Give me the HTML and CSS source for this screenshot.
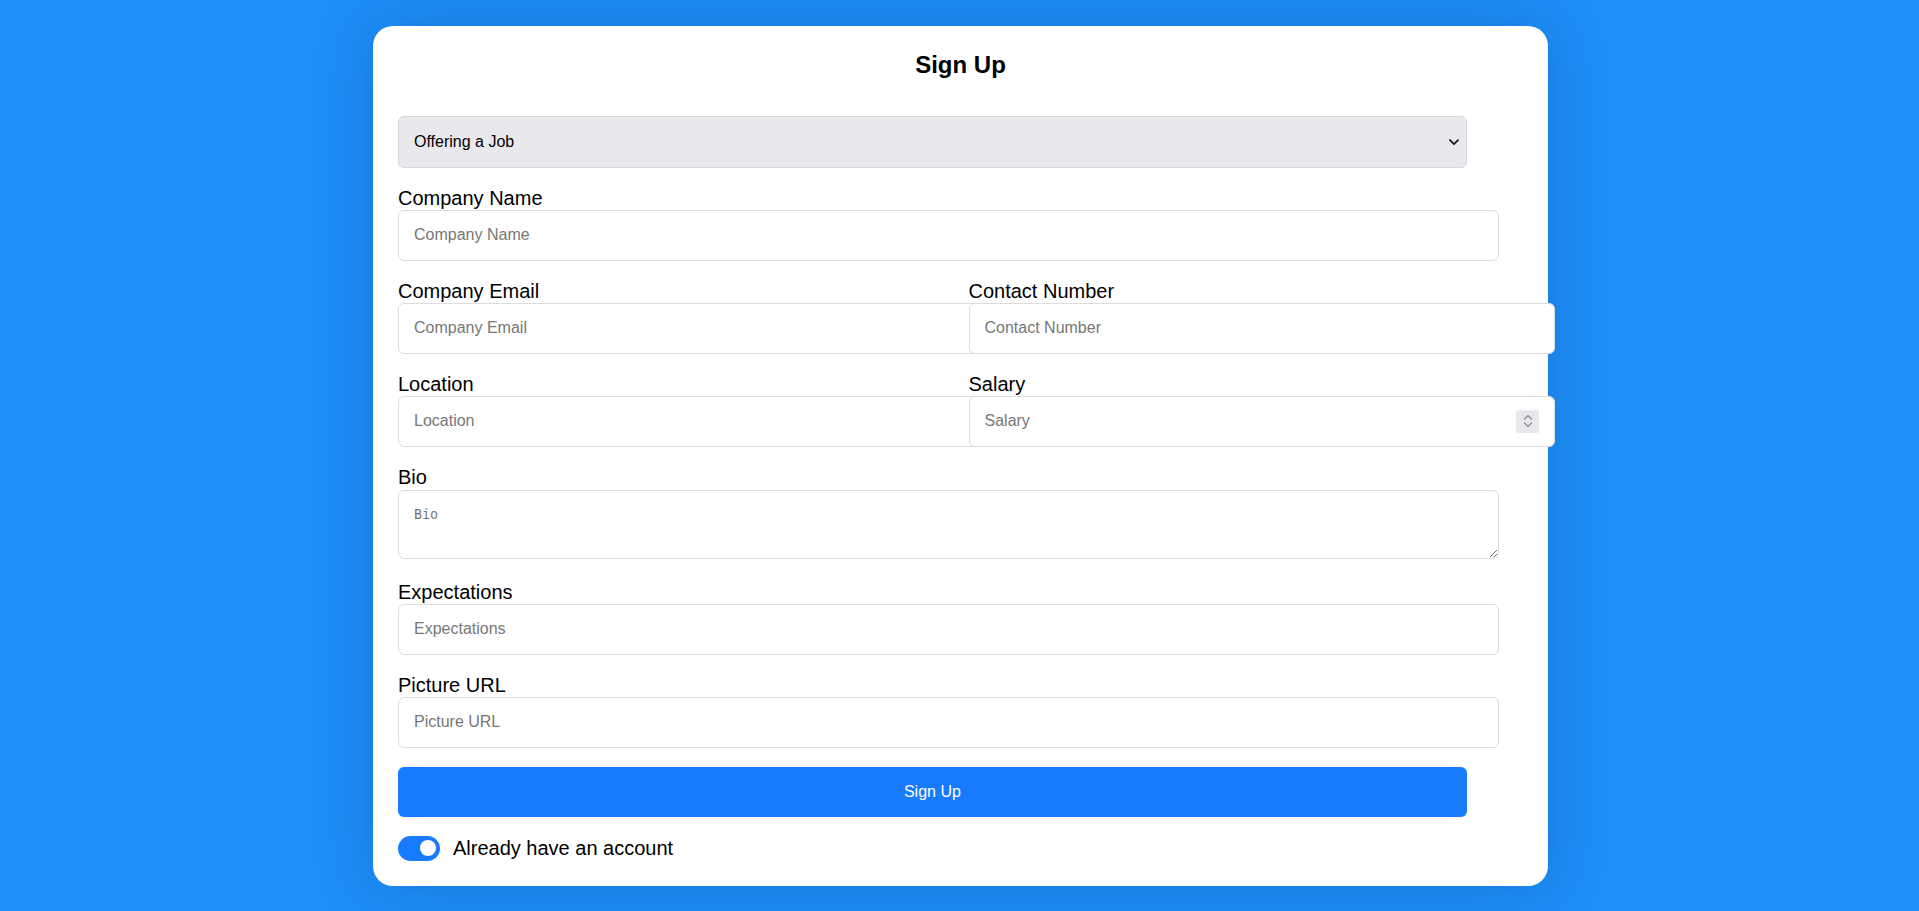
FILE: index.html
```html
<!DOCTYPE html>
<html lang="en">
<head>
<meta charset="utf-8">
<title>Sign Up</title>
<link rel="stylesheet" href="styles.css">
</head>
<body>
<main class="card">
  <h2 class="title">Sign Up</h2>
  <form class="form">
    <div class="select-wrap">
      <select class="role">
        <option>Offering a Job</option>
        <option>Looking for a Job</option>
      </select>
      <svg class="chevron" width="10" height="7" viewBox="0 0 10 7"><path d="M1 1.2l4 4 4-4" fill="none" stroke="#1c1c1c" stroke-width="1.8" stroke-linecap="round" stroke-linejoin="round"/></svg>
    </div>

    <div class="field">
      <label class="label">Company Name</label>
      <input class="input" type="text" placeholder="Company Name">
    </div>

    <div class="row">
      <div class="field">
        <label class="label">Company Email</label>
        <input class="input input-col" type="email" placeholder="Company Email">
      </div>
      <div class="field">
        <label class="label">Contact Number</label>
        <input class="input input-col" type="text" placeholder="Contact Number">
      </div>
    </div>

    <div class="row">
      <div class="field">
        <label class="label">Location</label>
        <input class="input input-col" type="text" placeholder="Location">
      </div>
      <div class="field">
        <label class="label">Salary</label>
        <div class="num-wrap">
          <input class="input input-col" type="number" placeholder="Salary">
          <span class="spinner">
            <svg width="10" height="16" viewBox="0 0 10 16"><path d="M1.5 6l3.5-3.5 3.5 3.5M1.5 10l3.5 3.5 3.5-3.5" fill="none" stroke="#8a8a90" stroke-width="1.2" stroke-linecap="round" stroke-linejoin="round"/></svg>
          </span>
        </div>
      </div>
    </div>

    <div class="field bio">
      <label class="label">Bio</label>
      <textarea class="textarea" placeholder="Bio"></textarea>
    </div>

    <div class="field">
      <label class="label">Expectations</label>
      <input class="input" type="text" placeholder="Expectations">
    </div>

    <div class="field">
      <label class="label">Picture URL</label>
      <input class="input" type="text" placeholder="Picture URL">
    </div>

    <button class="submit" type="button">Sign Up</button>

    <label class="toggle-row">
      <span class="switch"><span class="knob"></span></span>
      <span class="toggle-text">Already have an account</span>
    </label>
  </form>
</main>
</body>
</html>
```

FILE: styles.css
```css
* {
  font-family: "Liberation Sans", Arial, sans-serif;
}

body {
  margin: 0;
  min-height: 100vh;
  background: #1e8ef8;
  display: flex;
  align-items: center;
  justify-content: center;
  padding-left: 2px;
}

.card {
  width: 1125px;
  padding: 25px;
  background: #ffffff;
  border-radius: 20px;
  box-shadow: 0 0 60px rgba(10, 40, 90, 0.22);
}

.title {
  margin: 0 0 37px;
  font-size: 24px;
  line-height: 28px;
  font-weight: 700;
  text-align: center;
  color: #000;
}

.form {
  display: flex;
  flex-direction: column;
  gap: 19px;
}

.select-wrap {
  position: relative;
  width: 95%;
}

.role {
  appearance: none;
  -webkit-appearance: none;
  display: block;
  width: 100%;
  height: 52px;
  box-sizing: border-box;
  margin: 0;
  padding: 0 15px;
  border: 1px solid #d7d7db;
  border-radius: 6px;
  background: #e9e9ed;
  font-size: 16px;
  color: #000;
}

.chevron {
  position: absolute;
  right: 8px;
  top: 23px;
}

.field {
  display: flex;
  flex-direction: column;
  align-items: flex-start;
}

.label {
  display: block;
  font-size: 20px;
  line-height: 23px;
  color: #000;
}

.input {
  display: block;
  width: 95%;
  height: 19px;
  margin: 0;
  padding: 15px;
  border: 1px solid #dcdcdc;
  border-radius: 6px;
  background: #fff;
  font-size: 16px;
  color: #000;
  outline: none;
}

.input::placeholder,
.textarea::placeholder {
  color: #777;
  opacity: 1;
}

.input-col {
  width: 100%;
}

.input[type="number"]::-webkit-inner-spin-button,
.input[type="number"]::-webkit-outer-spin-button {
  -webkit-appearance: none;
  margin: 0;
}

.row {
  display: grid;
  grid-template-columns: 1fr 1fr;
  column-gap: 16px;
}

.row .field {
  min-width: 0;
}

.num-wrap {
  position: relative;
  width: 100%;
}

.spinner {
  position: absolute;
  right: -16px;
  top: 14px;
  width: 23px;
  height: 23px;
  background: #e9e9ed;
  border-radius: 2px;
  display: flex;
  align-items: center;
  justify-content: center;
}

.bio {
  margin-bottom: 3px;
}

.textarea {
  display: block;
  width: 95%;
  height: 36px;
  margin: 1px 0 0;
  padding: 16px 15px 15px;
  border: 1px solid #dcdcdc;
  border-radius: 6px;
  font-family: "DejaVu Sans Mono", "Liberation Mono", monospace;
  font-size: 13.33px;
  color: #000;
  outline: none;
}

.submit {
  width: 95%;
  height: 50px;
  margin: 0;
  border: none;
  border-radius: 6px;
  background: #187bff;
  color: #fff;
  font-size: 16px;
  cursor: pointer;
}

.toggle-row {
  display: flex;
  align-items: center;
  gap: 13px;
  font-size: 20px;
  line-height: 25px;
  color: #000;
}

.switch {
  width: 42px;
  height: 25px;
  box-sizing: border-box;
  border-radius: 13px;
  background: #187bff;
  display: flex;
  align-items: center;
  justify-content: flex-end;
  padding-right: 4px;
}

.knob {
  width: 16px;
  height: 16px;
  border-radius: 50%;
  background: #fff;
}
```
